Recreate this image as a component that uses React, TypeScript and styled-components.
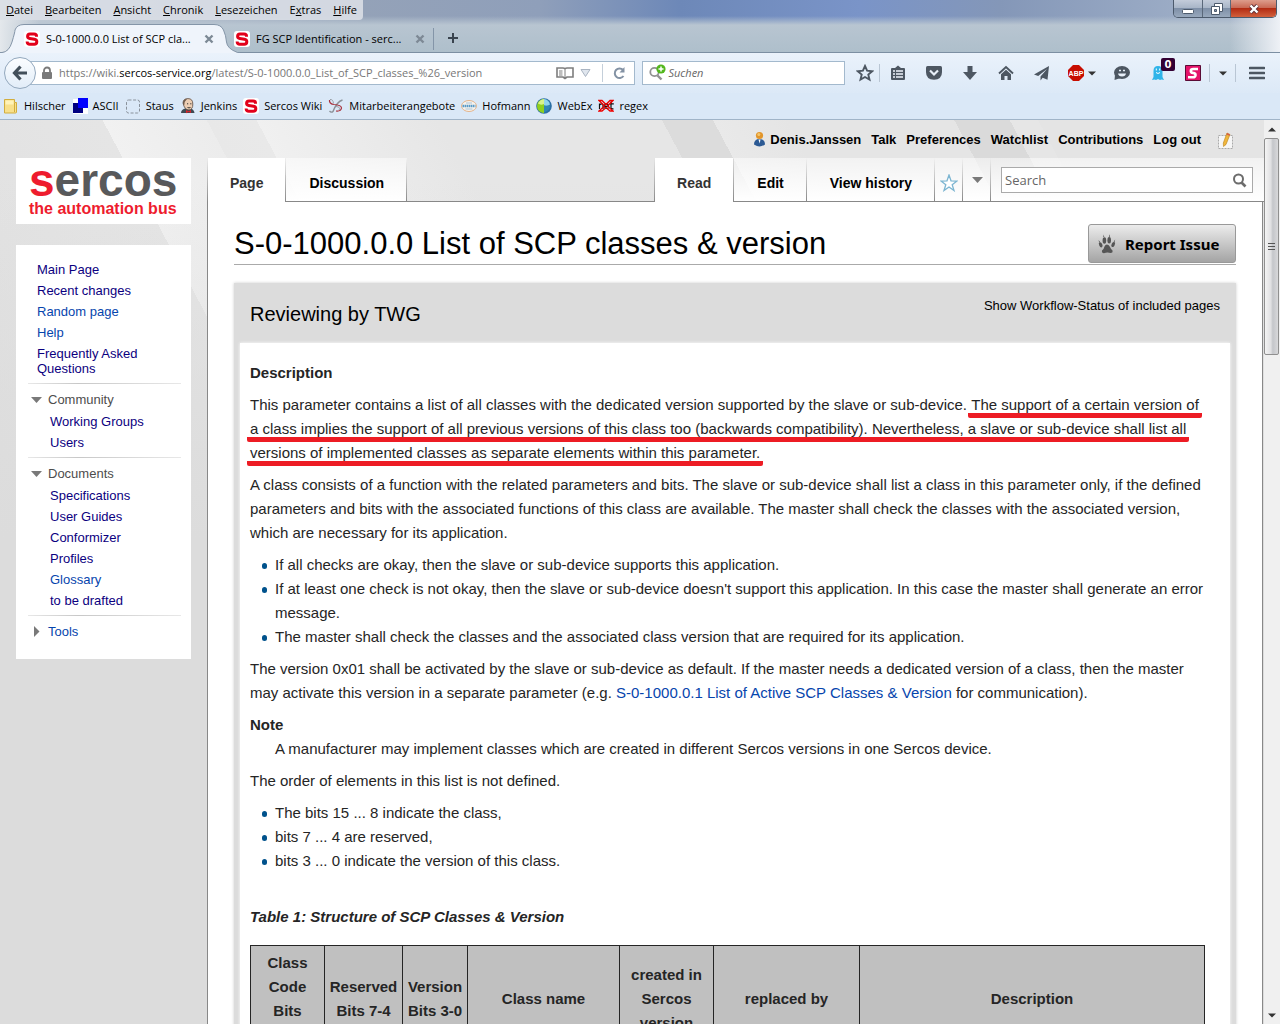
import React from "react";
import styled, { createGlobalStyle, css } from "styled-components";

const uiFont = `"Open Sans", "Noto Sans", sans-serif`;
const pageFont = `"Liberation Sans", Arial, sans-serif`;

const GlobalStyle = createGlobalStyle`
  *, *::before, *::after { box-sizing: border-box; }
  body { margin: 0; background: #dcdcdc; overflow: hidden; }
  button, input { font: inherit; color: inherit; }
  button { border: 0; padding: 0; background: none; }
  ul { list-style: none; margin: 0; padding: 0; }
  svg { display: block; flex: none; }
`;

const Window = styled.div`
  display: flex;
  flex-direction: column;
  height: 100vh;
  overflow: hidden;
  font-family: ${pageFont};
`;

/* ---------- browser chrome ---------- */

const Chrome = styled.header`
  flex: none;
  font: 11px/16px ${uiFont};
  color: #000;
  border-bottom: 1px solid #a0b4c8;
`;

const TitleArea = styled.div`
  background:
    linear-gradient(90deg, #e4e8ec 0, #e4e8ec00 40px, #fff0 calc(100% - 50px), #eef1f6 100%),
    linear-gradient(#b8c5d100 0, #b8c5d100 16px, #b8c5d1 25px, #aebfcb 52px),
    linear-gradient(90deg, #c8cfd9 0, #94a2b8 360px, #8f9fba 540px, #6d88b8 680px, #7a94c8 860px, #8497b8 1000px, #a9b8cd 100%);
  border-bottom: 1px solid #7c8fa2;
`;

const MenuRow = styled.div`
  display: flex;
  justify-content: space-between;
  align-items: flex-start;
  height: 24px;
`;

const MenuBar = styled.nav`
  display: flex;
  gap: 12px;
  height: 20px;
  padding: 2px 6px;
  background: #d9dee6e6;
  border-radius: 0 0 4px 0;
`;

const MenuItem = styled.button`
  white-space: nowrap;
`;

const Caption = styled.div`
  display: flex;
  margin-right: 3px;
  border: 1px solid #4c5a6c;
  border-top: 0;
  border-radius: 0 0 5px 5px;
  overflow: hidden;
`;

const CaptionButton = styled.button<{ $close?: boolean }>`
  display: grid;
  place-items: center;
  width: ${(p) => (p.$close ? 46 : 28)}px;
  height: 17px;
  background: ${(p) =>
    p.$close
      ? "linear-gradient(#dd9d8c 0, #c96a55 45%, #b32c13 50%, #d2603c 100%)"
      : "linear-gradient(#c3ccda 0, #a9b6c8 45%, #7f90a8 50%, #98a8bc 100%)"};
  & + & { border-left: 1px solid #5a687a; }
`;

const TabStrip = styled.div`
  display: flex;
  align-items: stretch;
  height: 28px;
`;

const ActiveTab = styled.div`
  display: flex;
  flex: none;
  margin: 0 -6px -1px 0;
`;

const TabBody = styled.button<{ $active?: boolean }>`
  display: flex;
  align-items: center;
  gap: 6px;
  width: ${(p) => (p.$active ? 190 : 200)}px;
  white-space: nowrap;
  ${(p) =>
    p.$active
      ? css`background: #eff4fb; border-top: 1px solid #8495a8;`
      : css`border-right: 1px solid #8495a8; margin: 4px 0 2px;`}
`;

const TabTitle = styled.span`
  width: 153px;
  text-align: left;
`;

const NewTab = styled.button`
  display: grid;
  place-items: center;
  width: 38px;
`;

const Toolbar = styled.div`
  display: flex;
  align-items: center;
  height: 40px;
  padding: 0 3px 0 4px;
  background: linear-gradient(#eaf2fb, #dce9f7);
`;

const BackButton = styled.button`
  position: relative;
  z-index: 1;
  display: grid;
  place-items: center;
  flex: none;
  width: 32px;
  height: 32px;
  margin-right: -16px;
  border: 1px solid #93a8bd;
  border-radius: 50%;
  background: linear-gradient(#fbfdff, #e2edf8);
`;

const AddressBar = styled.div`
  display: flex;
  align-items: center;
  flex: 61 1 0;
  min-width: 0;
  height: 24px;
  padding-left: 20px;
  border: 1px solid #a3b9cd;
  background: #fff;
  color: #777;
`;

const Address = styled.div`
  flex: 1;
  min-width: 0;
  margin-left: 6px;
  overflow: hidden;
  white-space: nowrap;
  b { font-weight: 400; color: #000; }
`;

const ReloadButton = styled.button`
  display: grid;
  place-items: center;
  width: 32px;
  height: 18px;
  margin-left: 6px;
  border-left: 1px solid #c4cfda;
`;

const SearchBar = styled.label`
  display: flex;
  align-items: center;
  gap: 2px;
  flex: 20 1 0;
  min-width: 0;
  height: 24px;
  margin: 0 5px 0 7px;
  padding-left: 6px;
  border: 1px solid #a3b9cd;
  background: #fff;
`;

const BareInput = styled.input<{ $italic?: boolean }>`
  flex: 1;
  min-width: 0;
  border: 0;
  padding: 0;
  outline: 0;
  background: none;
  &::placeholder {
    color: #666;
    opacity: 1;
    font-style: ${(p) => (p.$italic ? "italic" : "normal")};
  }
`;

const ToolButton = styled.button<{ $w?: number; $rule?: boolean }>`
  position: relative;
  display: flex;
  align-items: center;
  justify-content: center;
  gap: 4px;
  flex: none;
  width: ${(p) => p.$w ?? 36}px;
  height: 18px;
  ${(p) => p.$rule && css`border-right: 1px solid #b9c6d4;`}
`;

const Badge = styled.span`
  position: absolute;
  left: 21px;
  top: -6px;
  width: 14px;
  height: 13px;
  border-radius: 2px;
  background: #330033;
  color: #fff;
  font: bold 10px/13px "DejaVu Sans", sans-serif;
  text-align: center;
`;

const Bookmarks = styled.nav`
  display: flex;
  gap: 6px;
  height: 26px;
  padding: 0 3px;
  background: #dae8f7;
`;

const Bookmark = styled.a`
  display: flex;
  align-items: center;
  gap: 5px;
  color: #000;
  text-decoration: none;
  white-space: nowrap;
`;

/* ---------- wiki page ---------- */

const Viewport = styled.div`
  display: flex;
  flex: 1;
  min-height: 0;
`;

const Wiki = styled.div`
  display: grid;
  grid-template-columns: 207px 1fr;
  flex: 1;
  min-width: 0;
  overflow: hidden;
  background:
    linear-gradient(#dcdcdc00 60px, #dcdcdc 420px) 0 0 / 100% 540px no-repeat,
    linear-gradient(62deg, #dedede 0, #e5e5e5 344px, #f1f1f1 344px, #ececec 436px, #e8e8e8 436px, #e9e9e9 480px,
      #f0f0f0 480px, #e6e6e6 640px, #e6e6e6 838px, #dcdcdc 838px, #dcdcdc 883px, #e9e9e9 883px, #e5e5e5 950px,
      #e5e5e5 1096px, #dadada 1096px, #dadada 1145px, #e6e6e6 1145px, #e6e6e6 1170px, #e4e4e4 1170px) 0 0 / 100% 540px no-repeat,
    #dcdcdc;
`;

const Sidebar = styled.aside`
  display: flex;
  flex-direction: column;
  gap: 21px;
  padding: 38px 16px;
`;

const Logo = styled.a`
  display: block;
  height: 66px;
  padding: 2px 0 0 13px;
  background: #fff;
  color: #58595b;
  font-weight: 700;
  font-size: 46px;
  line-height: 40px;
  text-decoration: none;
  white-space: nowrap;
  em { font-style: normal; color: #ee1c2e; }
`;

const Tagline = styled.span`
  display: block;
  font-size: 16px;
  line-height: 18px;
  color: #ee1c2e;
`;

const NavBox = styled.nav`
  padding: 17px 10px 20px 12px;
  background: #fff;
  font-size: 13px;
  line-height: 15px;
`;

const NavGroup = styled.section`
  & + & {
    margin-top: 7px;
    border-top: 1px solid #d4d4d4;
    border-image: linear-gradient(90deg, #e8e8e8, #c8c8c8 33%, #e8e8e8) 1;
    padding-top: 8px;
  }
`;

const NavHeading = styled.button<{ $link?: boolean }>`
  display: flex;
  align-items: center;
  gap: 6px;
  padding-left: 3px;
  color: ${(p) => (p.$link ? "#0645ad" : "#4d4d4d")};
`;

const NavList = styled.ul<{ $nested?: boolean }>`
  display: flex;
  flex-direction: column;
  gap: 6px;
  padding-left: ${(p) => (p.$nested ? 22 : 9)}px;
  padding-top: ${(p) => (p.$nested ? 7 : 0)}px;
`;

const Link = styled.a<{ $visited?: boolean }>`
  color: ${(p) => (p.$visited ? "#0b0080" : "#0645ad")};
  text-decoration: none;
`;

const Main = styled.div`
  display: flex;
  flex-direction: column;
  min-width: 0;
`;

const PersonalBar = styled.nav`
  display: flex;
  align-items: center;
  justify-content: flex-end;
  gap: 10px;
  height: 38px;
  padding: 0 30px 0 0;
  font-size: 13px;
  font-weight: 700;
`;

const PersonalLink = styled.a`
  display: flex;
  align-items: center;
  gap: 4px;
  color: #000;
  text-decoration: none;
`;

const EditIcon = styled(PersonalLink)`
  padding: 4px 0 0 6px;
`;

const TabRow = styled.div`
  display: flex;
  height: 44px;
  padding-left: 1px;
  background: linear-gradient(#8880, #888) 0 0 / 1px 100% no-repeat;
`;

const WikiTab = styled.a<{ $active?: boolean }>`
  display: flex;
  align-items: center;
  padding: ${(p) => (p.$active ? "6px 22px 0" : "7px 23px 0")};
  height: 44px;
  font-size: 14px;
  font-weight: 700;
  line-height: 16px;
  text-decoration: none;
  white-space: nowrap;
  color: ${(p) => (p.$active ? "#333" : "#000")};
  ${(p) =>
    p.$active
      ? css`background: #fff;`
      : css`
          border-bottom: 1px solid #888;
          background: linear-gradient(#8880, #888) 100% 0 / 1px 100% no-repeat, linear-gradient(#ffffff80, #fff);
        `}
`;

const TabEdge = styled.span`
  width: 1px;
  background: linear-gradient(#8880, #888);
`;

const TabGap = styled.div`
  flex: 1;
  border-bottom: 1px solid #888;
`;

const TabAction = styled.button`
  width: 28px;
  display: grid;
  place-items: center;
  border-bottom: 1px solid #888;
  background: linear-gradient(#8880, #888) 100% 0 / 1px 100% no-repeat, linear-gradient(#ffffff80, #fff);
`;

const WatchAction = styled(TabAction)`
  padding-top: 6px;
`;

const WikiSearchCell = styled.div`
  width: 273px;
  padding: 9px 11px 0 10px;
  border-bottom: 1px solid #888;
  background: linear-gradient(#ffffff80, #fff);
`;

const WikiSearch = styled.label`
  display: flex;
  align-items: center;
  height: 26px;
  padding: 0 5px 0 3px;
  border: 1px solid #aaa;
  background: #fff;
  font: 13px/18px ${uiFont};
`;

const Content = styled.main`
  flex: 1;
  margin-right: 1px;
  padding: 22px 26px 0;
  border: 1px solid #888;
  border-top: 0;
  background: #fff;
  color: #252525;
`;

const TitleRow = styled.div`
  display: flex;
  align-items: flex-end;
  justify-content: space-between;
  border-bottom: 1px solid #aaa;
`;

const PageTitle = styled.h1`
  margin: 0;
  font-size: 31px;
  line-height: 40px;
  font-weight: 400;
  color: #000;
`;

const ReportButton = styled.button`
  display: flex;
  align-items: center;
  gap: 9px;
  width: 148px;
  height: 39px;
  margin-bottom: 1px;
  padding-left: 9px;
  border: 1px solid #999;
  border-radius: 3px;
  background: linear-gradient(#ececec, #a4a4a4);
  color: #000;
  font: bold 15px/20px "Noto Sans", "Open Sans", sans-serif;
  white-space: nowrap;
`;

const Panel = styled.section`
  margin-top: 18px;
  padding: 0 6px;
  background: #dcdcdc;
  box-shadow: 0 0 3px #ccc;
`;

const PanelHead = styled.div`
  display: flex;
  justify-content: space-between;
  height: 60px;
  padding: 15px 10px 0;
  color: #000;
`;

const PanelTitle = styled.h2`
  margin: 0;
  font-size: 20px;
  line-height: 32px;
  font-weight: 400;
`;

const PanelLink = styled.a`
  font-size: 13px;
  line-height: 16px;
  color: #000;
  text-decoration: none;
`;

const Article = styled.article`
  min-height: 760px;
  padding: 18px 9px 0 10px;
  background: #fff;
  box-shadow: 0 0 3px #fff;
  font-size: 15px;
  line-height: 24px;
`;

const Subhead = styled.h3`
  margin: 0 0 8px;
  font-size: 15px;
  line-height: 24px;
`;

const Text = styled.p`
  margin: 0 0 8px;
`;

const Marked = styled.mark`
  margin: 0 -3px;
  padding: 0 3px 5px;
  border-radius: 2px;
  color: inherit;
  background: linear-gradient(#ed1c24, #ed1c24) 0 100% / 100% 5px no-repeat;
  box-decoration-break: clone;
  -webkit-box-decoration-break: clone;
`;

const Bullets = styled.ul`
  margin: 0 0 8px;
`;

const Bullet = styled.li`
  display: flex;
  padding-left: 12px;
  &::before {
    content: "";
    flex: none;
    width: 5px;
    height: 6px;
    margin: 10px 8px 0 0;
    border-radius: 3px;
    background: #00528c;
  }
`;

const Definition = styled.dl`
  margin: 0 0 8px;
  dt { font-weight: 700; }
  dd { margin: 0 0 0 25px; }
`;

const TableTitle = styled.p`
  margin: 32px 0 16px;
  font-weight: 700;
  font-style: italic;
`;

const TableWrap = styled.div`
  margin-right: 16px;
`;

const DataTable = styled.table`
  width: 100%;
  table-layout: fixed;
  border-collapse: collapse;
  background: #c0c0c0;
`;

const Th = styled.th<{ $w?: number }>`
  width: ${(p) => (p.$w ? `${p.$w}px` : "auto")};
  padding: 5px 0;
  border: 1px solid #252525;
  vertical-align: middle;
`;

const ScrollTrack = styled.div`
  display: flex;
  flex-direction: column;
  flex: none;
  width: 16px;
  background: #f0f0f0;
`;

const ScrollButton = styled.button`
  display: grid;
  place-items: center;
  height: 18px;
`;

const ScrollThumb = styled.div`
  display: grid;
  place-items: center;
  height: 217px;
  margin: 0 1px auto 0;
  border: 1px solid #8f8f8f;
  border-radius: 2px;
  background: linear-gradient(90deg, #f4f4f4, #e0e0e2 45%, #c4c6ca 60%, #d8d8da);
`;

/* ---------- icons ---------- */

const ink = "#4d5762";

const SercosIcon = () => (
  <svg width="16" height="16" viewBox="0 0 16 16">
    <rect width="16" height="16" rx="3" fill="#fff" />
    <path d="M12.500 5.800V5Q12.500 2.900 10 2.900H6Q3.600 2.900 3.600 5.200 3.600 7.200 5.800 7.500L10.400 8.200Q12.800 8.600 12.800 10.700 12.800 13.200 10.200 13.200H5.800Q3.200 13.200 3.200 10.900V10.400" fill="none" stroke="#e2001a" strokeWidth="3" />
  </svg>
);

const CloseIcon = () => (
  <svg width="10" height="10" viewBox="0 0 10 10">
    <path d="M1.500 1.500l7 7M8.500 1.500l-7 7" stroke="#7d8995" strokeWidth="2.400" />
  </svg>
);

const Caret = ({ color = "#333" }: { color?: string }) => (
  <svg width="8" height="5" viewBox="0 0 8 5">
    <path d="M0 .5h8L4 4.500z" fill={color} />
  </svg>
);

const FolderIcon = () => (
  <svg width="16" height="16" viewBox="0 0 16 16">
    <path d="M1.500 1.500h10v3h2v9.500q0 1-1 1h-11z" fill="#f8e08a" stroke="#d1ad3e" />
    <path d="M11.500 5v9" stroke="#d1ad3e" />
    <path d="M2.500 2.500h8v4h-8z" fill="#fff3b8" />
  </svg>
);
const AsciiIcon = () => (
  <svg width="16" height="16" viewBox="0 0 16 16">
    <path d="M1 1h15v15H1z" fill="#fff" />
    <path d="M6 0h10v10H6z" fill="#00f" />
    <path d="M1 5h5v5h5v5H1z" fill="#000080" />
  </svg>
);
const DashedIcon = () => (
  <svg width="16" height="16" viewBox="0 0 16 16">
    <rect x="1.500" y="2" width="13" height="13" rx="2" fill="none" stroke="#8a929b" strokeDasharray="3 1.600" />
  </svg>
);
const JenkinsIcon = () => (
  <svg width="16" height="16" viewBox="0 0 16 16">
    <path d="M1 15q0-3.500 4-4.500l6 0q3 1 3.500 4.500z" fill="#3f4a52" />
    <path d="M3 5Q3.200.6 8 .6T12.800 6Q13 11.500 9 12 4.500 12 3 5z" fill="#eccdb2" stroke="#5b4a40" strokeWidth=".8" />
    <path d="M3 6.500Q2.400 1 7 1 4.500 3 4.300 7z" fill="#6d5a4d" />
    <path d="M7 5.800h1.200M10.200 5.800h1.200M7.500 9.500q1.500.8 3 0" stroke="#333" fill="none" />
    <path d="M6 12l2.500 1.200L11 12v3l-2.500-1L6 15.200z" fill="#d4242a" />
  </svg>
);
const RibbonIcon = () => (
  <svg width="16" height="16" viewBox="0 0 16 16" fill="none">
    <path d="M14.500 2Q9 3.500 5 13.500 3.500 15 1.500 13" stroke="#8a9097" strokeWidth="1.400" />
    <path d="M1.500 2q-.5 3.500 4 4.500 8 .5 8 3.500-.5 3.500-5.500 3" stroke="#a8323c" strokeWidth="1.200" />
    <path d="M2 1.500q3-.5 3.500 4M8 8.500q5 .5 3 3.500" stroke="#9aa1a8" />
  </svg>
);
const HofmannIcon = () => (
  <svg width="16" height="16" viewBox="0 0 16 16">
    <ellipse cx="8" cy="8" rx="7.500" ry="5.500" fill="#f6f3ee" stroke="#e3b48c" />
    <path d="M1.500 8h13" stroke="#5a9bc8" strokeWidth="2.400" strokeDasharray="1.500 .5" />
    <path d="M5 5h6M4.500 11h7" stroke="#aac4d8" />
  </svg>
);
const WebexIcon = () => (
  <svg width="16" height="16" viewBox="0 0 16 16">
    <circle cx="8" cy="8" r="7.800" fill="#2b6fa4" />
    <path d="M8 .8Q1 2 1 8t7 7.200z" fill="#8fd01e" />
    <path d="M8 1Q3.500 1.500 2 5.500 4.500 7.500 8 6z" fill="#d8f28c" />
    <path d="M8 1q5 .5 6 5.500Q11.500 8.500 8 7.500z" fill="#8fd4ee" />
    <path d="M8 7.500q3.500 1 6.300-.5Q14 12.500 8 14.500z" fill="#2f87b4" />
  </svg>
);
const RegexIcon = () => (
  <svg width="16" height="16" viewBox="0 0 16 16">
    <path d="M1.500 11V5.500M1.500 7q3-2.500 3.500.5V11M6.500 8.300h4q0-2.500-2-2.500t-2 2.700q.5 2.600 4 1.700M13 3.500V10q.3 1.200 2.500.8M11.800 5.800h4" fill="none" stroke="#111" strokeWidth="1.200" />
    <path d="M1 2.500h3l4 4 4-4h3L9.500 8l5.500 5h-3L8 9.500 4 13H1l5.500-5z" fill="none" stroke="#e00" strokeWidth="1.300" />
  </svg>
);
const StarIcon = () => (
  <svg width="18" height="18" viewBox="0 0 18 18">
    <path d="M9 2l2.100 4.700 5.100.5-3.900 3.400 1.200 5L9 13l-4.500 2.600 1.200-5-3.900-3.400 5.100-.5z" fill="none" stroke={ink} strokeWidth="1.900" />
  </svg>
);
const ListIcon = () => (
  <svg width="16" height="16" viewBox="0 0 16 16">
    <path d="M2 3h3l3-2.500L11 3h3q1 0 1 1v10q0 1-1 1H2q-1 0-1-1V4q0-1 1-1z" fill={ink} />
    <path d="M3 6h2M6 6h7M3 9h2M6 9h7M3 12h2M6 12h7" stroke="#eef4fb" strokeWidth="1.600" />
  </svg>
);
const PocketIcon = () => (
  <svg width="18" height="16" viewBox="0 0 18 16">
    <path d="M2.500 1h13Q17 1 17 2.500V7q0 7.500-8 7.800Q1 14.500 1 7V2.500Q1 1 2.500 1z" fill={ink} />
    <path d="M5 5.500l4 4 4-4" fill="none" stroke="#e8f0f9" strokeWidth="2.200" />
  </svg>
);
const DownIcon = () => (
  <svg width="16" height="16" viewBox="0 0 16 16">
    <path d="M5.500 1h5v6H15l-7 8-7-8h4.500z" fill={ink} />
  </svg>
);
const HomeIcon = () => (
  <svg width="16" height="16" viewBox="0 0 16 16">
    <path d="M1 8.500L8 2l7 6.500" fill="none" stroke={ink} strokeWidth="1.900" />
    <path d="M3 9.300l5-4.500 5 4.500V15H9.500v-4h-3v4H3z" fill={ink} />
  </svg>
);
const PlaneIcon = () => (
  <svg width="16" height="16" viewBox="0 0 16 16">
    <path d="M15 1L0 9.500l4.200 1.500L13 4 6.500 11.500V15.500l2.200-2.800 4.800 2z" fill={ink} />
  </svg>
);
const AbpIcon = () => (
  <svg width="16" height="16" viewBox="0 0 16 16">
    <path d="M5 0h6l5 5v6l-5 5H5l-5-5V5z" fill="#c70d00" />
    <text x="8" y="11" textAnchor="middle" fontFamily="Liberation Sans, sans-serif" fontSize="7" fontWeight="700" fill="#fff">ABP</text>
  </svg>
);
const SmileIcon = () => (
  <svg width="18" height="16" viewBox="0 0 18 16">
    <ellipse cx="9" cy="7.500" rx="8" ry="6.500" fill={ink} />
    <path d="M2 10l-.5 5 6-2z" fill={ink} />
    <path d="M5 8.500h8q-.5 3-4 3t-4-3z" fill="#e8f0f9" />
    <path d="M6 5.500h2M10 5.500h2" stroke="#e8f0f9" strokeWidth="1.600" />
  </svg>
);
const GhostIcon = () => (
  <svg width="14" height="16" viewBox="0 0 14 16">
    <path d="M2.500 12V6Q2.500 1 7 1t4.500 5v6l1.500 3-2.500-.5L9 15l-2-1-2 1-1.500-.5L1 15z" fill="#2fb4e9" />
    <path d="M5.300 3.500v2M8.700 3.500v2M5 7.500q2 2 4 0" stroke="#fff" fill="none" />
  </svg>
);
const StylishIcon = () => (
  <svg width="16" height="16" viewBox="0 0 16 16">
    <path d="M.5.500h15v15H.5z" fill="#e5136a" stroke="#5a0b35" />
    <path d="M13 4H8.300Q5.800 4 5.800 5.900 5.800 7.600 8 7.900 10.700 8.200 10.500 10.200 10.200 12.200 8 12.200H3" fill="none" stroke="#fff" strokeWidth="2.600" />
  </svg>
);
const BurgerIcon = () => (
  <svg width="16" height="14" viewBox="0 0 16 14">
    <path d="M1 2h14M1 7h14M1 12h14" stroke={ink} strokeWidth="2.600" strokeLinecap="round" />
  </svg>
);
const UserIcon = () => (
  <svg width="13" height="16" viewBox="0 0 13 16">
    <path d="M1 13.500Q1 8 6.500 8t5.500 5.500Q9 15.500 6.500 15.500T1 13.500z" fill="#2c5a94" />
    <path d="M5.500 8.500h2l-.8 4z" fill="#fff" />
    <circle cx="6.500" cy="4.500" r="3.600" fill="#e2962c" />
    <circle cx="5.800" cy="3.500" r="1.500" fill="#f6c66c" />
  </svg>
);
const PencilNote = () => (
  <svg width="17" height="18" viewBox="0 0 17 18">
    <path d="M1.500 3.500h14v13h-14z" fill="#f6f6f6" stroke="#aaa" strokeDasharray="2 1" />
    <path d="M10 1l3 1.500-4 10-2.500 2-.2-3.500z" fill="#f0b63c" stroke="#b98116" strokeWidth=".6" />
    <path d="M10 1l3 1.500-.6 1.300-3-1.400z" fill="#d65a4a" />
  </svg>
);
const PawIcon = () => (
  <svg width="18" height="20" viewBox="0 0 18 20" fill="#555">
    <path d="M9 10.500q2 0 3 2.500t2.500 3.500q.5 2.500-2 2.500-3.500-1-6.500.3-2.500-.3-2-2.800Q6 15 6.500 12.500 7.300 10.500 9 10.500z" />
    <ellipse cx="6.400" cy="6.500" rx="1.800" ry="3.200" />
    <ellipse cx="11.200" cy="6.300" rx="1.800" ry="3.200" />
    <ellipse cx="2.700" cy="10.800" rx="1.600" ry="2.700" transform="rotate(-25 2.700 10.800)" />
    <ellipse cx="15.200" cy="10.500" rx="1.600" ry="2.700" transform="rotate(25 15.200 10.500)" />
    <path d="M5.500 0.500l.8 2.500h-1zM11.500.3l.6 2.500h-1.200zM.6 6l1.500 2-1 .5zM17.200 5.500l-1.600 2.200 1 .4z" />
  </svg>
);

const DownTriangle = () => (
  <svg width="11" height="8" viewBox="0 0 11 8"><path d="M0 1h11L5.500 7z" fill="#797979" /></svg>
);

/* ---------- data ---------- */

const menus = [
  ["D", "atei"], ["B", "earbeiten"], ["A", "nsicht"], ["C", "hronik"], ["L", "esezeichen"], ["E", "xtras", "x"], ["H", "ilfe"],
];

const bookmarks: [string, () => React.JSX.Element][] = [
  ["Hilscher", FolderIcon], ["ASCII", AsciiIcon], ["Staus", DashedIcon], ["Jenkins", JenkinsIcon], ["Sercos Wiki", SercosIcon],
  ["Mitarbeiterangebote", RibbonIcon], ["Hofmann", HofmannIcon], ["WebEx", WebexIcon], ["regex", RegexIcon],
];

const tools: [string, () => React.JSX.Element][] = [
  ["Clipboard", ListIcon], ["Pocket", PocketIcon], ["Downloads", DownIcon], ["Home", HomeIcon], ["Share", PlaneIcon],
];

type NavEntry = [string, boolean];
const mainLinks: NavEntry[] = [
  ["Main Page", true], ["Recent changes", true], ["Random page", false], ["Help", false], ["Frequently Asked Questions", true],
];
const community: NavEntry[] = [["Working Groups", true], ["Users", true]];
const documents: NavEntry[] = [
  ["Specifications", true], ["User Guides", true], ["Conformizer", true], ["Profiles", true], ["Glossary", false], ["to be drafted", true],
];

const NavLinks = ({ items, nested }: { items: NavEntry[]; nested?: boolean }) => (
  <NavList $nested={nested}>
    {items.map(([label, visited]) => (
      <li key={label}><Link href="#" $visited={visited}>{label}</Link></li>
    ))}
  </NavList>
);

const BrowserChrome = () => (
  <Chrome>
    <TitleArea>
      <MenuRow>
        <MenuBar aria-label="Menu">
          {menus.map(([first, rest, key]) => (
            <MenuItem key={first}>
              {key ? <>{first}<u>{key}</u>{rest.slice(1)}</> : <><u>{first}</u>{rest}</>}
            </MenuItem>
          ))}
        </MenuBar>
        <Caption>
          <CaptionButton aria-label="Minimize">
            <svg width="12" height="10" viewBox="0 0 12 10"><rect x=".5" y="5.500" width="11" height="4" rx="1" fill="#fff" stroke="#4c5a6c" /></svg>
          </CaptionButton>
          <CaptionButton aria-label="Restore">
            <svg width="12" height="12" viewBox="0 0 12 12">
              <path d="M3.500.5h8v8h-8z" fill="#fff" stroke="#4c5a6c" />
              <path d="M.5 3.500h8v8h-8z" fill="#fff" stroke="#4c5a6c" />
              <path d="M3.500 6.500h2v2h-2z" fill="#8c9cb2" stroke="#4c5a6c" />
            </svg>
          </CaptionButton>
          <CaptionButton $close aria-label="Close window">
            <svg width="12" height="10" viewBox="0 0 12 10">
              <path d="M2.500 1.500l7 7M9.500 1.500l-7 7" stroke="#5c3038" strokeWidth="4" />
              <path d="M2.500 1.500l7 7M9.500 1.500l-7 7" stroke="#fff" strokeWidth="2.400" />
            </svg>
          </CaptionButton>
        </Caption>
      </MenuRow>
      <TabStrip>
        <ActiveTab>
          <svg width="24" height="29" viewBox="0 0 24 29">
            <path d="M0 28.500h2Q9 28 12 18T15 6q2-5.500 9-5.500V29H0z" fill="#eff4fb" />
            <path d="M0 28.500h2Q9 28 12 18T15 6q2-5.500 9-5.500" fill="none" stroke="#8495a8" />
          </svg>
          <TabBody $active>
            <SercosIcon />
            <TabTitle>S-0-1000.0.0 List of SCP cla...</TabTitle>
            <CloseIcon />
          </TabBody>
          <svg width="26" height="29" viewBox="0 0 26 29">
            <path d="M0 .5Q7 .5 9.500 6t3 12 11 10.500H26V29H0z" fill="#eff4fb" />
            <path d="M0 .5Q7 .5 9.500 6t3 12 11 10.500H26" fill="none" stroke="#8495a8" />
          </svg>
        </ActiveTab>
        <TabBody>
          <SercosIcon />
          <TabTitle>FG SCP Identification - serc...</TabTitle>
          <CloseIcon />
        </TabBody>
        <NewTab aria-label="New tab">
          <svg width="10" height="10" viewBox="0 0 10 10"><path d="M5 0v10M0 5h10" stroke="#39434e" strokeWidth="2" /></svg>
        </NewTab>
      </TabStrip>
    </TitleArea>
    <Toolbar>
      <BackButton aria-label="Back">
        <svg width="16" height="16" viewBox="0 0 16 16"><path d="M8.500 1.500L2.500 8l6 6.500M3 8h12" fill="none" stroke="#424f5a" strokeWidth="3.200" /></svg>
      </BackButton>
      <AddressBar>
        <svg width="12" height="14" viewBox="0 0 12 14">
          <path d="M3 7V4.500a3 3 0 0 1 6 0V7" fill="none" stroke="#7a7a7a" strokeWidth="1.800" />
          <rect x="1" y="6" width="10" height="7" rx="1" fill="#7a7a7a" />
        </svg>
        <Address>https://wiki.<b>sercos-service.org</b>/latest/S-0-1000.0.0_List_of_SCP_classes_%26_version</Address>
        <svg width="18" height="14" viewBox="0 0 18 14">
          <path d="M1 2h6q2 0 2 1.500Q9 2 11 2h6v9h-6l-2 1.500L7 11H1z" fill="none" stroke="#7d7d7d" strokeWidth="1.600" />
          <path d="M9 3.500V12M3 5h3.500M3 7h3.500M3 9h3.500" stroke="#7d7d7d" />
        </svg>
        <svg width="22" height="10" viewBox="0 0 22 10"><path d="M7 1.500h9L11.500 8.500z" fill="#e0e6ee" stroke="#a9b4c2" /></svg>
        <ReloadButton aria-label="Reload">
          <svg width="14" height="14" viewBox="0 0 14 14">
            <path d="M11 3.800A4.800 4.800 0 1 0 11.500 10" fill="none" stroke="#8392a4" strokeWidth="2" />
            <path d="M12.500 1v5.500H7.500z" fill="#8392a4" />
          </svg>
        </ReloadButton>
      </AddressBar>
      <SearchBar>
        <svg width="17" height="18" viewBox="0 0 17 18">
          <circle cx="5.500" cy="8" r="4.200" fill="none" stroke="#919191" strokeWidth="1.800" />
          <path d="M8.500 11.500l4 4" stroke="#919191" strokeWidth="2.400" />
          <circle cx="12" cy="5" r="4.600" fill="#53b71d" />
          <path d="M12 2.500v5M9.500 5h5" stroke="#fff" strokeWidth="1.500" />
        </svg>
        <BareInput $italic placeholder="Suchen" aria-label="Suchen" />
      </SearchBar>
      <ToolButton $w={30} $rule aria-label="Add bookmark"><StarIcon /></ToolButton>
      {tools.map(([label, Icon]) => <ToolButton key={label} aria-label={label}><Icon /></ToolButton>)}
      <ToolButton $w={44} aria-label="Adblock Plus"><AbpIcon /><Caret /></ToolButton>
      <ToolButton aria-label="Chat"><SmileIcon /></ToolButton>
      <ToolButton aria-label="Tracker blocker"><GhostIcon /><Badge>0</Badge></ToolButton>
      <ToolButton $w={34} $rule aria-label="Styles"><StylishIcon /></ToolButton>
      <ToolButton $w={26} $rule aria-label="More styles"><Caret /></ToolButton>
      <ToolButton $w={41} aria-label="Open menu"><BurgerIcon /></ToolButton>
    </Toolbar>
    <Bookmarks aria-label="Bookmarks">
      {bookmarks.map(([label, Icon]) => <Bookmark key={label} href="#"><Icon />{label}</Bookmark>)}
    </Bookmarks>
  </Chrome>
);

export default function App() {
  return (
    <Window>
      <GlobalStyle />
      <BrowserChrome />
      <Viewport>
        <Wiki>
          <Sidebar>
            <Logo href="#"><em>s</em>ercos<Tagline>the automation bus</Tagline></Logo>
            <NavBox>
              <NavGroup><NavLinks items={mainLinks} /></NavGroup>
              <NavGroup>
                <NavHeading><DownTriangle />Community</NavHeading>
                <NavLinks nested items={community} />
              </NavGroup>
              <NavGroup>
                <NavHeading><DownTriangle />Documents</NavHeading>
                <NavLinks nested items={documents} />
              </NavGroup>
              <NavGroup>
                <NavHeading $link>
                  <svg width="11" height="11" viewBox="0 0 11 11"><path d="M3 0v11l5.500-5.500z" fill="#797979" /></svg>
                  Tools
                </NavHeading>
              </NavGroup>
            </NavBox>
          </Sidebar>
          <Main>
            <PersonalBar>
              <PersonalLink href="#"><UserIcon />Denis.Janssen</PersonalLink>
              {["Talk", "Preferences", "Watchlist", "Contributions", "Log out"].map((label) => (
                <PersonalLink key={label} href="#">{label}</PersonalLink>
              ))}
              <EditIcon href="#" aria-label="Notes"><PencilNote /></EditIcon>
            </PersonalBar>
            <TabRow>
              <WikiTab href="#" $active>Page</WikiTab>
              <TabEdge />
              <WikiTab href="#">Discussion</WikiTab>
              <TabGap />
              <TabEdge />
              <WikiTab href="#" $active>Read</WikiTab>
              <TabEdge />
              <WikiTab href="#">Edit</WikiTab>
              <WikiTab href="#">View history</WikiTab>
              <WatchAction aria-label="Watch">
                <svg width="18" height="18" viewBox="0 0 18 18">
                  <path d="M9 1l2 5.800 6 .2-4.800 3.700L14 16.500 9 13l-5 3.500 1.800-5.800L1 7l6-.2z" fill="#fff" stroke="#7cb5d1" strokeWidth="1.300" />
                </svg>
              </WatchAction>
              <TabAction aria-label="More actions"><DownTriangle /></TabAction>
              <WikiSearchCell>
                <WikiSearch>
                  <BareInput placeholder="Search" aria-label="Search" />
                  <svg width="15" height="15" viewBox="0 0 15 15" fill="none" stroke="#6c6c6c">
                    <circle cx="6.500" cy="6" r="4.500" strokeWidth="2" />
                    <path d="M9.500 9.500l4 4" strokeWidth="2.600" />
                  </svg>
                </WikiSearch>
              </WikiSearchCell>
            </TabRow>
            <Content>
              <TitleRow>
                <PageTitle>S-0-1000.0.0 List of SCP classes &amp; version</PageTitle>
                <ReportButton><PawIcon />Report Issue</ReportButton>
              </TitleRow>
              <Panel>
                <PanelHead>
                  <PanelTitle>Reviewing by TWG</PanelTitle>
                  <PanelLink href="#">Show Workflow-Status of included pages</PanelLink>
                </PanelHead>
                <Article>
                  <Subhead>Description</Subhead>
                  <Text>
                    This parameter contains a list of all classes with the dedicated version supported by the slave or sub-device.{" "}
                    <Marked>
                      The support of a certain version of<br />
                      a class implies the support of all previous versions of this class too (backwards compatibility). Nevertheless, a
                      slave or sub-device shall list all<br />
                      versions of implemented classes as separate elements within this parameter.
                    </Marked>
                  </Text>
                  <Text>
                    A class consists of a function with the related parameters and bits. The slave or sub-device shall list a class in
                    this parameter only, if the defined parameters and bits with the associated functions of this class are available.
                    The master shall check the classes with the associated version, which are necessary for its application.
                  </Text>
                  <Bullets>
                    <Bullet>If all checks are okay, then the slave or sub-device supports this application.</Bullet>
                    <Bullet>
                      If at least one check is not okay, then the slave or sub-device doesn't support this application. In this case
                      the master shall generate an error message.
                    </Bullet>
                    <Bullet>The master shall check the classes and the associated class version that are required for its application.</Bullet>
                  </Bullets>
                  <Text>
                    The version 0x01 shall be activated by the slave or sub-device as default. If the master needs a dedicated version of
                    a class, then the master<br />
                    may activate this version in a separate parameter (e.g.{" "}
                    <Link href="#">S-0-1000.0.1 List of Active SCP Classes &amp; Version</Link> for communication).
                  </Text>
                  <Definition>
                    <dt>Note</dt>
                    <dd>A manufacturer may implement classes which are created in different Sercos versions in one Sercos device.</dd>
                  </Definition>
                  <Text>The order of elements in this list is not defined.</Text>
                  <Bullets>
                    <Bullet>The bits 15 ... 8 indicate the class,</Bullet>
                    <Bullet>bits 7 ... 4 are reserved,</Bullet>
                    <Bullet>bits 3 ... 0 indicate the version of this class.</Bullet>
                  </Bullets>
                  <TableTitle>Table 1: Structure of SCP Classes &amp; Version</TableTitle>
                  <TableWrap>
                    <DataTable>
                      <thead>
                        <tr>
                          <Th $w={74}>Class<br />Code<br />Bits<br />15-8</Th>
                          <Th $w={78}>Reserved Bits 7-4</Th>
                          <Th $w={65}>Version Bits 3-0</Th>
                          <Th $w={152}>Class name</Th>
                          <Th $w={94}>created in Sercos version</Th>
                          <Th $w={146}>replaced by</Th>
                          <Th>Description</Th>
                        </tr>
                      </thead>
                    </DataTable>
                  </TableWrap>
                </Article>
              </Panel>
            </Content>
          </Main>
        </Wiki>
        <ScrollTrack aria-hidden="true">
          <ScrollButton tabIndex={-1}><svg width="8" height="5" viewBox="0 0 8 5"><path d="M0 4.500h8L4 .5z" fill="#333" /></svg></ScrollButton>
          <ScrollThumb>
            <svg width="8" height="9" viewBox="0 0 8 9"><path d="M0 1.500h7M0 4.500h7M0 7.500h7" stroke="#555" /></svg>
          </ScrollThumb>
          <ScrollButton tabIndex={-1}><Caret /></ScrollButton>
        </ScrollTrack>
      </Viewport>
    </Window>
  );
}
